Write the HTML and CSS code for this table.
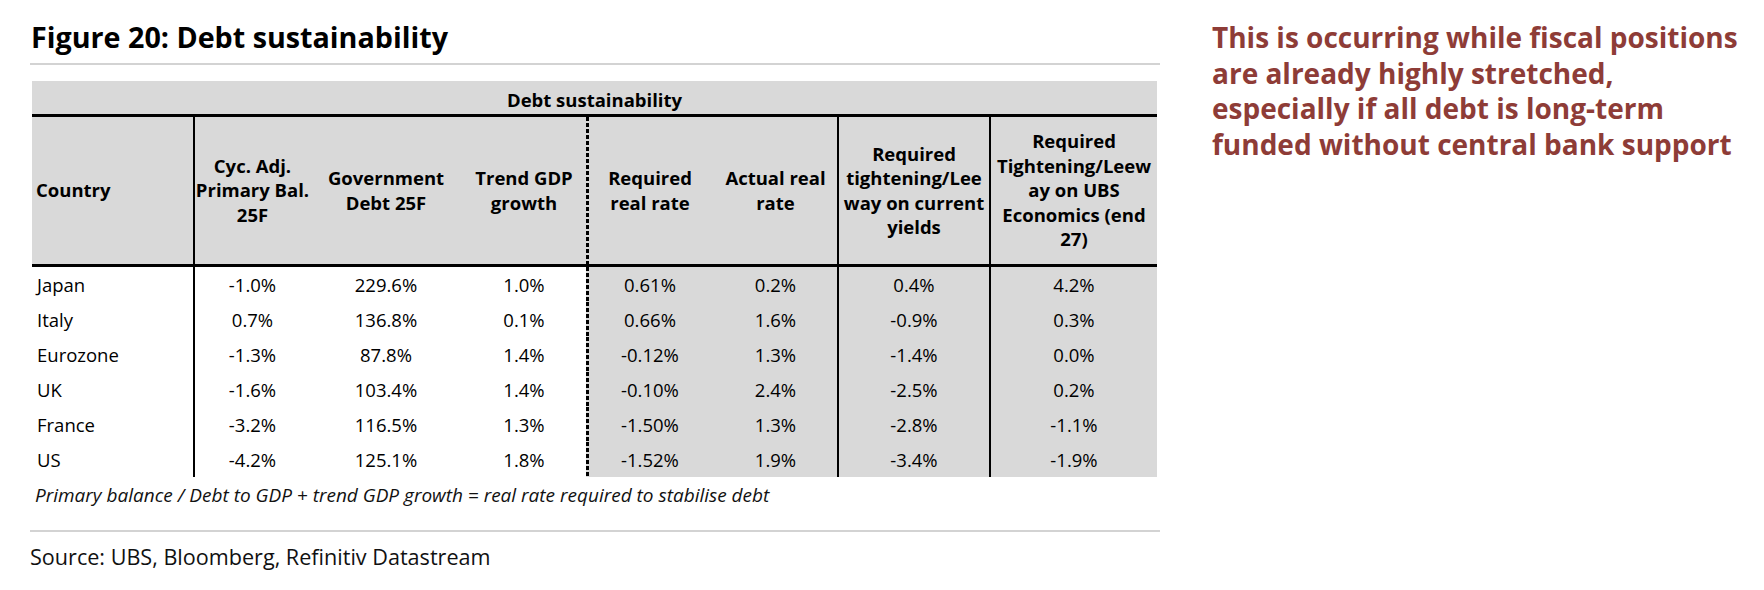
FILE: index.html
```html
<!DOCTYPE html>
<html lang="en">
<head>
<meta charset="utf-8">
<title>Figure 20: Debt sustainability</title>
<link rel="stylesheet" href="styles.css">
</head>
<body>
<div class="page">
  <section class="figure">
    <h1 class="fig-title">Figure 20: Debt sustainability</h1>
    <div class="rule"></div>
    <div class="dtable">
      <div class="cell top">Debt sustainability</div>

      <div class="cell th th-left">Country</div>
      <div class="cell th vl">Cyc. Adj.<br>Primary Bal.<br>25F</div>
      <div class="cell th">Government<br>Debt 25F</div>
      <div class="cell th">Trend GDP<br>growth</div>
      <div class="cell th dl">Required<br>real rate</div>
      <div class="cell th">Actual real<br>rate</div>
      <div class="cell th vl">Required<br>tightening/Lee<br>way on current<br>yields</div>
      <div class="cell th vl">Required<br>Tightening/Leew<br>ay on UBS<br>Economics (end<br>27)</div>

      <div class="cell cty">Japan</div>
      <div class="cell num vl">-1.0%</div>
      <div class="cell num">229.6%</div>
      <div class="cell num">1.0%</div>
      <div class="cell num g dl">0.61%</div>
      <div class="cell num g">0.2%</div>
      <div class="cell num g vl">0.4%</div>
      <div class="cell num g vl">4.2%</div>

      <div class="cell cty">Italy</div>
      <div class="cell num vl">0.7%</div>
      <div class="cell num">136.8%</div>
      <div class="cell num">0.1%</div>
      <div class="cell num g dl">0.66%</div>
      <div class="cell num g">1.6%</div>
      <div class="cell num g vl">-0.9%</div>
      <div class="cell num g vl">0.3%</div>

      <div class="cell cty">Eurozone</div>
      <div class="cell num vl">-1.3%</div>
      <div class="cell num">87.8%</div>
      <div class="cell num">1.4%</div>
      <div class="cell num g dl">-0.12%</div>
      <div class="cell num g">1.3%</div>
      <div class="cell num g vl">-1.4%</div>
      <div class="cell num g vl">0.0%</div>

      <div class="cell cty">UK</div>
      <div class="cell num vl">-1.6%</div>
      <div class="cell num">103.4%</div>
      <div class="cell num">1.4%</div>
      <div class="cell num g dl">-0.10%</div>
      <div class="cell num g">2.4%</div>
      <div class="cell num g vl">-2.5%</div>
      <div class="cell num g vl">0.2%</div>

      <div class="cell cty">France</div>
      <div class="cell num vl">-3.2%</div>
      <div class="cell num">116.5%</div>
      <div class="cell num">1.3%</div>
      <div class="cell num g dl">-1.50%</div>
      <div class="cell num g">1.3%</div>
      <div class="cell num g vl">-2.8%</div>
      <div class="cell num g vl">-1.1%</div>

      <div class="cell cty">US</div>
      <div class="cell num vl">-4.2%</div>
      <div class="cell num">125.1%</div>
      <div class="cell num">1.8%</div>
      <div class="cell num g dl">-1.52%</div>
      <div class="cell num g">1.9%</div>
      <div class="cell num g vl">-3.4%</div>
      <div class="cell num g vl">-1.9%</div>
    </div>
    <p class="note">Primary balance / Debt to GDP + trend GDP growth = real rate required to stabilise debt</p>
    <div class="rule rule-bottom"></div>
    <p class="source">Source: UBS, Bloomberg, Refinitiv Datastream</p>
  </section>

  <aside class="callout">This is occurring while fiscal positions<br>are already highly stretched,<br>especially if all debt is long-term<br>funded without central bank support</aside>
</div>
</body>
</html>
```

FILE: styles.css
```css
html, body {
  margin: 0;
  padding: 0;
  background: #ffffff;
}

body {
  font-family: "Open Sans", "Liberation Sans", sans-serif;
  color: #000000;
}

.page {
  display: flex;
  align-items: flex-start;
}

.figure {
  margin-left: 30px;
  width: 1130px;
  padding-top: 20px;
}

.fig-title {
  margin: 0;
  padding-left: 1px;
  font-size: 28.7px;
  line-height: 34px;
  font-weight: 700;
  white-space: nowrap;
}

.rule {
  height: 2px;
  background: #d3d3d3;
  margin-top: 9px;
}

.rule-bottom {
  margin-top: 23px;
}

.dtable {
  display: grid;
  grid-template-columns: 161px 117px 152px 124px 128px 123px 152px 168px;
  grid-template-rows: 36px 150px repeat(6, 35px);
  width: 1125px;
  margin: 16px 0 0 2px;
}

.cell {
  box-sizing: border-box;
  display: flex;
  align-items: center;
  white-space: nowrap;
}

.top {
  grid-column: 1 / -1;
  justify-content: center;
  padding-top: 4px;
  background: #d9d9d9;
  border-bottom: 3px solid #000000;
  font-weight: 700;
  font-size: 18.5px;
  line-height: 24px;
}

.th {
  justify-content: center;
  text-align: center;
  background: #d9d9d9;
  border-bottom: 3px solid #000000;
  font-weight: 700;
  font-size: 18.5px;
  line-height: 24.5px;
}

.th-left {
  justify-content: flex-start;
  text-align: left;
  padding-left: 4px;
}

.cty {
  padding-left: 5px;
  font-size: 18.5px;
}

.num {
  justify-content: center;
  font-size: 18.5px;
}

.g {
  background-color: #d9d9d9;
}

.vl {
  border-left: 2px solid #000000;
}

.dl {
  background-image: repeating-linear-gradient(to bottom, #000000 0, #000000 4px, transparent 4px, transparent 6px);
  background-size: 3px 100%;
  background-repeat: no-repeat;
  background-position: left top;
}

.note {
  margin: 6px 0 0 0;
  padding-left: 5px;
  font-style: italic;
  font-size: 19px;
  line-height: 24px;
  color: #111111;
  white-space: nowrap;
}

.source {
  margin: 11px 0 0 0;
  font-size: 21.6px;
  line-height: 28px;
  color: #111111;
  white-space: nowrap;
}

.callout {
  margin-left: 52px;
  padding-top: 20px;
  color: #8e3c37;
  font-weight: 700;
  font-size: 28px;
  line-height: 35.5px;
  white-space: nowrap;
}
```
